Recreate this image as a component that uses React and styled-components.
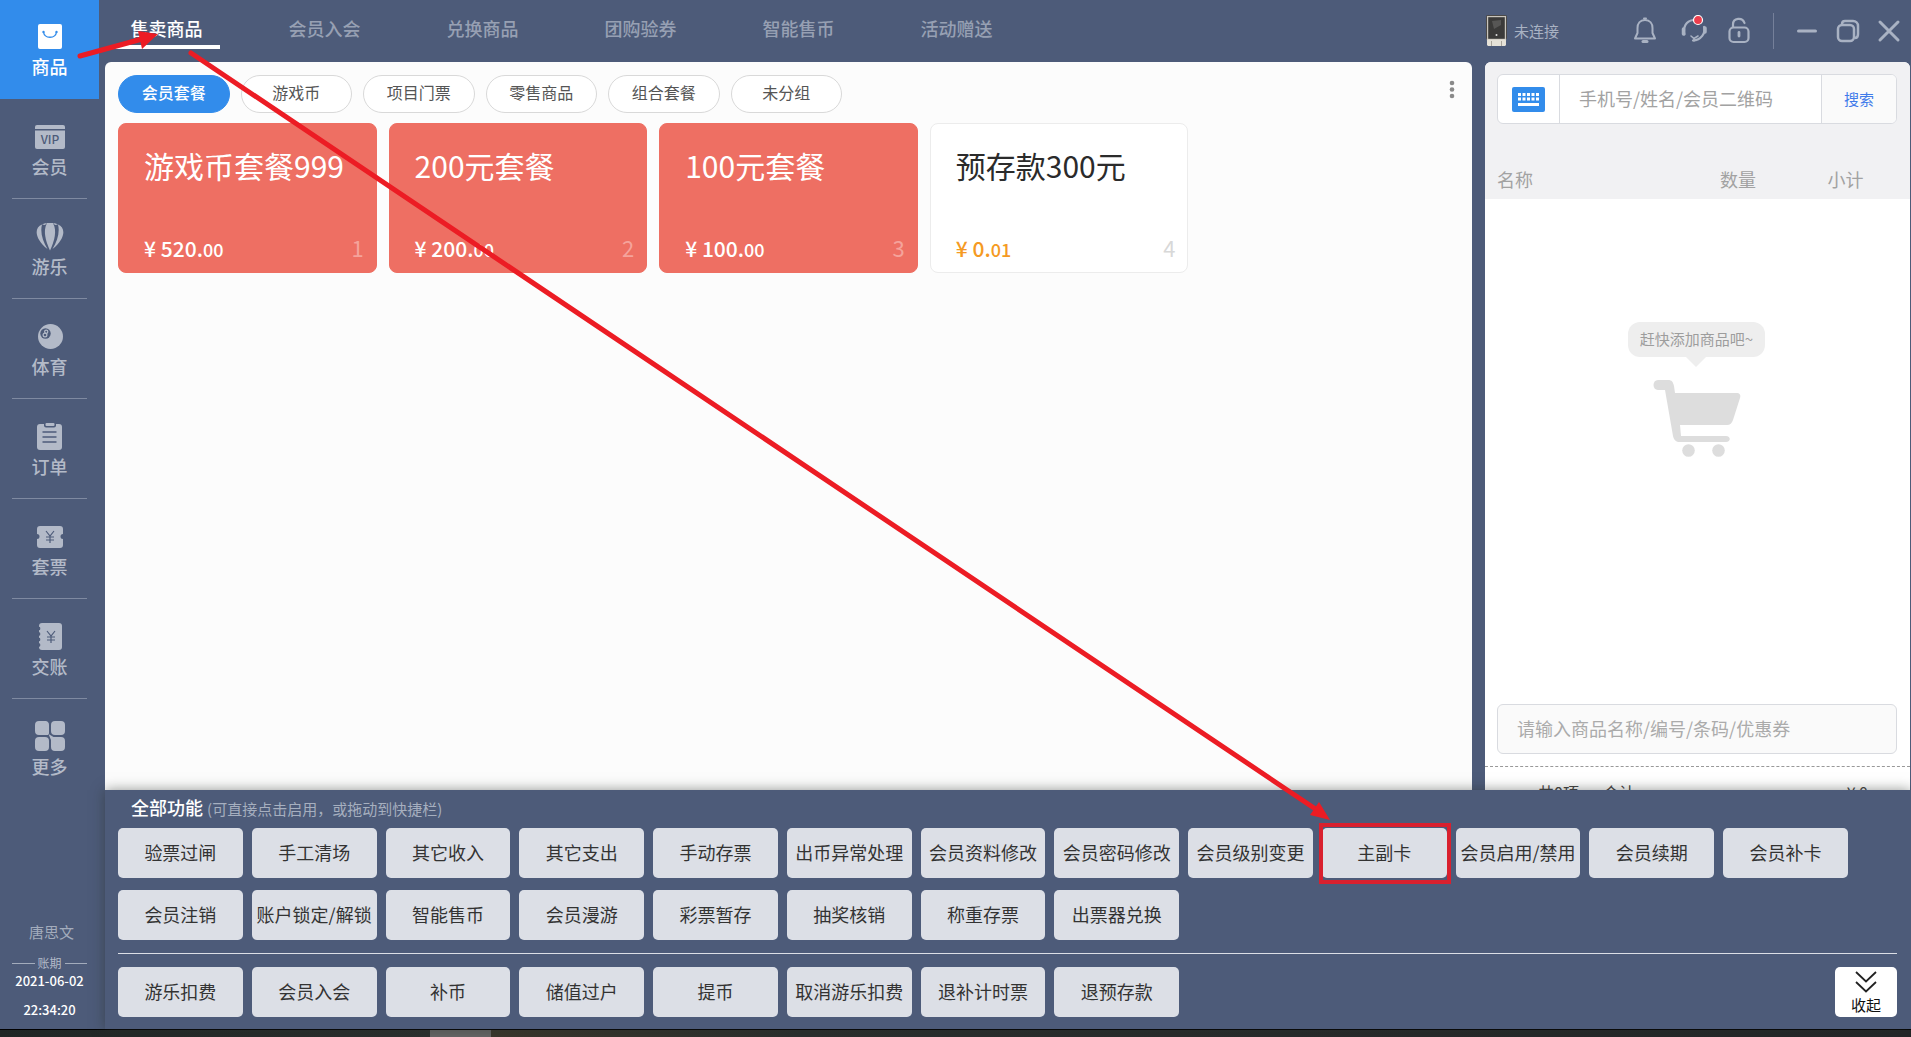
import React, { Fragment } from 'react';
import styled, { createGlobalStyle } from 'styled-components';

const GlobalStyle = createGlobalStyle`
    :root{
        --bg: #4d5b79;
        --blue: #328ceb;
        --muted: #b3bac8;
        --coral: #ee6f63;
        --red: #ec1c24;
    }
    *{
        box-sizing: border-box;
    }
    body{
        margin: 0;
        background: var(--bg);
        font-family: 'Noto Sans CJK SC', 'Noto Sans', sans-serif;
        font-size: 18px;
        line-height: 26px;
    }
    button, input{
        font-family: inherit;
        font-size: inherit;
        line-height: inherit;
        margin: 0;
        padding: 0;
        border: 0;
        background: none;
    }
    svg{
        display: block;
    }
`;

const Page = styled.div`
    position: relative;
    display: flex;
    flex-direction: column;
    height: 100vh;
    min-height: 760px;
    overflow: hidden;
    background: var(--bg);
`;

const Shell = styled.div`
    display: flex;
    flex: 1;
    min-height: 0;
`;

const Sidebar = styled.aside`
    display: flex;
    flex-direction: column;
    flex: 0 0 99px;
    padding-bottom: 9px;
`;

const SideItem = styled.button`
    position: relative;
    display: flex;
    flex-direction: column;
    align-items: center;
    width: 100%;
    height: ${(p) => (p.$active ? '99px' : '100px')};
    padding-top: ${(p) => (p.$active ? '20px' : '21px')};
    color: ${(p) => (p.$active ? '#fff' : 'var(--muted)')};
    background: ${(p) => (p.$active ? 'var(--blue)' : 'transparent')};
    font-weight: 500;
    svg{
        width: 32px;
        height: 32px;
        margin-bottom: 1px;
    }
    &:not(:first-child):not(:last-child)::after{
        content: '';
        position: absolute;
        left: 12px;
        right: 12px;
        bottom: 0;
        height: 1px;
        background: #7f8aa1;
    }
`;

const Shift = styled.div`
    margin-top: auto;
    text-align: center;
    color: #fff;
    font-size: 13px;
    line-height: 20px;
    font-weight: 500;
    p{
        margin: 0;
    }
    p + p{
        margin-top: 9px;
    }
    .shift__name{
        color: #a3acbc;
        font-size: 15px;
        font-weight: 400;
        margin-bottom: 14px;
        padding-left: 4px;
    }
    .shift__label{
        display: flex;
        align-items: center;
        gap: 3px;
        margin-bottom: 1px;
        padding: 0 12px;
        color: var(--muted);
        font-size: 12px;
        line-height: 14px;
        font-weight: 400;
        &::before,
        &::after{
            content: '';
            flex: 1;
            height: 1px;
            background: #a3acbc;
        }
    }
`;

const Main = styled.main`
    position: relative;
    display: flex;
    flex-direction: column;
    flex: 1;
    min-width: 0;
    margin-left: 6px;
`;

const TopBar = styled.header`
    display: flex;
    flex: 0 0 62px;
`;

const Nav = styled.nav`
    display: flex;
    flex: 1;
    gap: 51px;
    padding: 0 8px;
`;

const NavLink = styled.a`
    height: 49px;
    width: 107px;
    padding-top: 15px;
    text-align: center;
    text-decoration: none;
    font-weight: 500;
    color: ${(p) => (p.$active ? '#fff' : '#97a0b3')};
    border-bottom: 4px solid ${(p) => (p.$active ? '#fff' : 'transparent')};
`;

const Status = styled.div`
    display: flex;
    align-items: center;
    flex: 0 0 426px;
    padding-right: 9px;
    color: #a9b2c3;
    font-size: 15px;
    .status__device{
        display: flex;
        align-items: center;
        gap: 7px;
        flex: 1;
        padding-left: 1px;
    }
    .status__tools{
        display: flex;
        gap: 19px;
        padding-bottom: 2px;
    }
    .status__window{
        display: flex;
        align-items: center;
        gap: 15px;
        height: 36px;
        margin-left: 21px;
        padding-left: 20px;
        border-left: 1px solid #75809a;
    }
`;

const IconButton = styled.button`
    display: block;
    color: #a9b2c3;
`;

const Workspace = styled.div`
    display: flex;
    flex: 1;
    gap: 13px;
    min-height: 0;
    padding-right: 1px;
`;

const Goods = styled.section`
    flex: 1;
    min-width: 0;
    padding: 13px;
    background: #fcfcfc;
    border-radius: 6px 6px 0 0;
`;

const PillRow = styled.div`
    display: flex;
    align-items: flex-start;
    justify-content: space-between;
    margin-bottom: 10px;
    .pills__more{
        padding-top: 3px;
    }
`;

const Pills = styled.div`
    display: grid;
    grid-template-columns: repeat(6, 1fr);
    gap: 11px;
    width: 54%;
`;

const Pill = styled.button`
    height: 38px;
    border-radius: 19px;
    font-size: 16px;
    padding-bottom: 4px;
    font-weight: ${(p) => (p.$active ? 500 : 400)};
    color: ${(p) => (p.$active ? '#fff' : '#555')};
    background: ${(p) => (p.$active ? 'var(--blue)' : '#fff')};
    border: 1px solid ${(p) => (p.$active ? 'var(--blue)' : '#d9d9d9')};
`;

const Cards = styled.div`
    display: grid;
    grid-template-columns: repeat(5, 1fr);
    gap: 12px;
`;

const Card = styled.button`
    display: flex;
    flex-direction: column;
    justify-content: space-between;
    height: 150px;
    padding: 19px 12px 7px 25px;
    text-align: left;
    border-radius: 8px;
    border: 1px solid ${(p) => (p.$plain ? '#ececec' : 'var(--coral)')};
    color: ${(p) => (p.$plain ? '#2b2b2b' : '#fff')};
    background: ${(p) => (p.$plain ? '#fff' : 'var(--coral)')};
    .card__title{
        font-size: 30px;
        line-height: 44px;
    }
    .card__bottom{
        display: flex;
        justify-content: space-between;
        align-items: baseline;
        width: 100%;
        line-height: 32px;
    }
    .card__price{
        font-size: 21px;
        font-weight: 500;
        color: ${(p) => (p.$plain ? '#f59a23' : '#fff')};
        small{
            font-size: 18px;
        }
    }
    .card__index{
        font-size: 22px;
        color: ${(p) => (p.$plain ? '#d8d8d8' : '#f5a39b')};
    }
`;

const Cart = styled.section`
    display: flex;
    flex-direction: column;
    flex: 0 0 425px;
    background: #fff;
    border-radius: 6px 6px 0 0;
    overflow: hidden;
`;

const CartHead = styled.div`
    background: #f1f1f3;
    padding-top: 12px;
`;

const SearchBox = styled.form`
    display: flex;
    height: 50px;
    margin: 0 13px 37px 12px;
    background: #fff;
    border: 1px solid #d9dbe0;
    border-radius: 6px;
    overflow: hidden;
    .search__keyboard{
        display: flex;
        align-items: center;
        justify-content: center;
        width: 61px;
    }
    input{
        flex: 1;
        min-width: 0;
        padding: 0 19px 2px;
        border: solid #d9dbe0;
        border-width: 0 1px;
    }
    .search__submit{
        width: 74px;
        font-size: 15px;
        color: #3f7bea;
        background: #fafafa;
    }
    input::placeholder{
        color: #a2a2a2;
        opacity: 1;
    }
`;

const CartTable = styled.table`
    width: 100%;
    table-layout: fixed;
    border-collapse: collapse;
    th{
        height: 38px;
        padding: 0 0 2px;
        font-weight: 400;
        color: #a2a2a2;
    }
    th:nth-child(1){
        padding-left: 12px;
        text-align: left;
    }
    th:nth-child(2){
        width: 108px;
    }
    th:nth-child(3){
        width: 118px;
        padding-right: 11px;
    }
`;

const EmptyCart = styled.div`
    display: flex;
    flex-direction: column;
    align-items: center;
    flex: 1;
    padding: 123px 2px 0 0;
    p{
        position: relative;
        margin: 0 0 22px;
        padding: 0 12px 2px;
        line-height: 33px;
        font-size: 15px;
        color: #9d9d9d;
        background: #eee;
        border-radius: 12px;
    }
    p::after{
        content: '';
        position: absolute;
        left: 50%;
        top: 100%;
        margin-left: -10px;
        border: 10px solid transparent;
        border-top-color: #eee;
        border-bottom: 0;
    }
`;

const GoodsInput = styled.input`
    height: 50px;
    margin: 0 13px 12px 12px;
    padding: 0 19px 2px;
    background: #fafafa;
    border: 1px solid #d9dbe0;
    border-radius: 6px;
    &::placeholder{
        color: #ababab;
        opacity: 1;
    }
`;

const Total = styled.div`
    display: flex;
    gap: 24px;
    flex: 0 0 263px;
    padding: 12px 42px 0 53px;
    border-top: 1px dashed #999;
    font-size: 16px;
    color: #444;
    span:last-child{
        margin-left: auto;
    }
`;

const Drawer = styled.section`
    position: absolute;
    left: 0;
    right: 0;
    bottom: 0;
    padding: 4px 14px 12px 13px;
    background: var(--bg);
    box-shadow: 0 0 12px rgba(40, 45, 40, 0.5);
    h2{
        margin: 0 0 6px 13px;
        color: #fff;
        font-size: 18px;
        line-height: 26px;
        font-weight: 500;
        small{
            font-size: 15px;
            font-weight: 400;
            color: #a6afbf;
        }
    }
`;

const Actions = styled.div`
    display: grid;
    grid-template-columns: repeat(13, 1fr);
    gap: 12px 9px;
    padding-right: 49px;
`;

const Action = styled.button`
    position: relative;
    height: 50px;
    padding-bottom: 3px;
    color: #333;
    background: #dcdfe6;
    border-radius: 5px;
    white-space: nowrap;
    ${(p) => p.$marked && `
        &::after{
            content: '';
            position: absolute;
            z-index: 1;
            inset: -5px -4px -6px -3px;
            border: 4px solid #d9202e;
        }
    `}
`;

const Shortcuts = styled.div`
    position: relative;
    margin-top: 13px;
    padding-top: 13px;
    border-top: 1px solid #dcdfe6;
`;

const Collapse = styled.button`
    position: absolute;
    right: 0;
    bottom: 0;
    display: flex;
    flex-direction: column;
    align-items: center;
    width: 62px;
    height: 50px;
    padding-top: 3px;
    font-size: 15px;
    line-height: 22px;
    color: #111;
    background: #fff;
    border-radius: 5px;
`;

const TaskBar = styled.footer`
    flex: 0 0 8px;
    border-top: 1px solid #000;
    background: linear-gradient(90deg, #1f2625 0, #2b302f 430px, #666 430px, #666 491px, #3a372c 491px, #2a2f2e 800px, #232628);
`;

const Arrows = styled.svg`
    position: absolute;
    top: 0;
    left: 0;
    pointer-events: none;
    stroke: var(--red);
    fill: var(--red);
`;

const BagIcon = () => (
    <svg viewBox="0 0 32 32">
        <rect x="4" y="4" width="24" height="25" rx="2" fill="#fff" />
        <path d="M9.500 12c1 7 12 7 13 0" fill="none" stroke="#328ceb" strokeWidth="1.300" />
        <circle cx="9.500" cy="12" r="1.200" fill="#328ceb" />
        <circle cx="22.500" cy="12" r="1.200" fill="#328ceb" />
    </svg>
);

const VipIcon = () => (
    <svg viewBox="0 0 32 32" fill="currentColor">
        <path d="M1 7a2 2 0 0 1 2-2h26a2 2 0 0 1 2 2v2H1z" />
        <path d="M1 10.500h30V27a2 2 0 0 1-2 2H3a2 2 0 0 1-2-2z" />
        <text x="16" y="24" textAnchor="middle" fontSize="12" fontWeight="500" fill="#4d5b79">VIP</text>
    </svg>
);

const BalloonIcon = () => (
    <svg viewBox="0 0 32 32" fill="currentColor">
        <path d="M8 4.500C-.5 8 1 19 13.500 29 8.500 21 6 12 8 4.500z" />
        <path d="M24 4.500C32.500 8 31 19 18.500 29 23.500 21 26 12 24 4.500z" />
        <path d="M13 3h6c4.500 8 1 19-3 27.500C12 22 8.500 11 13 3z" />
        <path d="M8 4.500Q10 3 13 3l-2 2zM24 4.500Q22 3 19 3l2 2z" />
    </svg>
);

const BallIcon = () => (
    <svg viewBox="0 0 32 32">
        <circle cx="16.500" cy="16.500" r="12.500" fill="currentColor" />
        <circle cx="11.500" cy="13.500" r="5.200" fill="#4d5b79" />
        <g fill="none" stroke="currentColor" strokeWidth="1.200">
            <circle cx="12.200" cy="11.800" r="1.600" />
            <circle cx="11" cy="15" r="1.900" />
        </g>
    </svg>
);

const OrderIcon = () => (
    <svg viewBox="0 0 32 32">
        <rect x="3" y="4" width="25" height="26" rx="3" fill="currentColor" />
        <path d="M10 3h12v2.500a2 2 0 0 1-2 2h-8a2 2 0 0 1-2-2z" fill="#4d5b79" />
        <rect x="11.500" y="3" width="9" height="3" rx="1" fill="currentColor" />
        <path d="M9 12h13M9 17h13M9 22h13" stroke="#4d5b79" strokeWidth="1.400" strokeLinecap="round" />
    </svg>
);

const Yen = ({ x }) => (
    <path
        d={`M${x - 4} 11l4 5 4-5M${x} 16v7M${x - 4} 17h8M${x - 4} 20h8`}
        fill="none"
        stroke="#4d5b79"
        strokeWidth="1.200"
    />
);

const TicketIcon = () => (
    <svg viewBox="0 0 32 32">
        <path d="M6 6h20a3 3 0 0 1 3 3v5a2.500 2.500 0 0 0 0 5v6a3 3 0 0 1-3 3H6a3 3 0 0 1-3-3v-6a2.500 2.500 0 0 0 0-5V9a3 3 0 0 1 3-3z" fill="currentColor" />
        <Yen x={16} />
    </svg>
);

const BillIcon = () => (
    <svg viewBox="0 0 32 32">
        <rect x="5" y="3" width="23" height="27" rx="3" fill="currentColor" />
        <path d="M5 8v1M5 13.500v1M5 19v1M5 24.500v1" stroke="#4d5b79" strokeWidth="2.500" strokeLinecap="round" />
        <Yen x={17} />
    </svg>
);

const MoreIcon = () => (
    <svg viewBox="0 0 32 32" fill="currentColor">
        <path d="M5 1h7a4 4 0 0 1 3 4v6.500a3.500 3.500 0 0 1-1 3.500H5a4 4 0 0 1-4-4V5a4 4 0 0 1 4-4z" />
        <path d="M21 1h6a4 4 0 0 1 4 4v6a4 4 0 0 1-4 4h-6a4 4 0 0 1-4-4V5a4 4 0 0 1 4-4z" />
        <path d="M5 17h6a4 4 0 0 1 4 4v6a4 4 0 0 1-4 4H5a4 4 0 0 1-4-4v-6a4 4 0 0 1 4-4z" />
        <path d="M14.500 14l5 3H27a4 4 0 0 1 4 4v6a4 4 0 0 1-4 4h-6a4 4 0 0 1-4-4v-7z" />
    </svg>
);

const DeviceIcon = () => (
    <svg width="21" height="32" viewBox="0 0 21 32">
        <rect x="0" y="0" width="21" height="25" rx="2" fill="#2d2b2a" />
        <rect x="1.500" y="1.500" width="18" height="23" fill="#3b3a39" stroke="#c9c5bd" strokeWidth="1.400" />
        <path d="M6 6l9-1v5l-7 4z" fill="#575655" />
        <circle cx="10.500" cy="20" r="1" fill="#ddd" />
        <path d="M1 24.500h19v5.500l-1 1H2l-1-1z" fill="#e6e2d8" />
        <path d="M5.500 26v5M15.500 26v5" stroke="#aaa69c" />
    </svg>
);

const BellIcon = () => (
    <svg width="26" height="30" viewBox="0 0 26 30" fill="none" stroke="currentColor" strokeWidth="2" strokeLinejoin="round" strokeLinecap="round">
        <path d="M13 5c-5 0-7.500 3.500-7.500 8v5L3 23.500h20L20.500 18v-5c0-4.500-2.500-8-7.500-8z" />
        <path d="M12 3.500h2" />
        <path d="M11 26.500h4" strokeWidth="3" />
    </svg>
);

const ServiceIcon = () => (
    <svg width="30" height="30" viewBox="0 0 30 30" fill="none" stroke="currentColor" strokeWidth="2.200" strokeLinecap="round">
        <path d="M7.500 19.500C6 12 9 6 16 5" />
        <path d="M27 12c2 6-3 13-11 13.500" />
        <path d="M6.500 14v5" strokeWidth="3.500" />
        <path d="M28 13v4" strokeWidth="3.500" />
        <path d="M14 21l3 2.500 4-2.500M17 23.500V26" strokeWidth="1.600" />
        <circle cx="21" cy="5" r="4.500" fill="#ee3d4d" stroke="#fff" strokeWidth="1.200" />
    </svg>
);

const LockIcon = () => (
    <svg width="26" height="30" viewBox="0 0 26 30" fill="none" stroke="currentColor" strokeWidth="2.200" strokeLinecap="round">
        <rect x="3.500" y="12.500" width="19" height="14.500" rx="4" />
        <path d="M7 12V9.500C7 2.500 16.500 2 18.500 8" />
        <path d="M13 17.500v3.500" strokeWidth="2.800" />
    </svg>
);

const MinimizeIcon = () => (
    <svg width="26" height="26" viewBox="0 0 26 26" stroke="currentColor" strokeWidth="3" strokeLinecap="round">
        <path d="M4.500 13h17" />
    </svg>
);

const RestoreIcon = () => (
    <svg width="26" height="26" viewBox="0 0 26 26" fill="none" stroke="currentColor" strokeWidth="2.500">
        <rect x="3" y="7" width="16" height="16" rx="4" />
        <path d="M7 6c0-2 1-3 3-3h8a5 5 0 0 1 5 5v8c0 2-1 4-3 4" />
    </svg>
);

const CloseIcon = () => (
    <svg width="26" height="26" viewBox="0 0 26 26" stroke="currentColor" strokeWidth="3" strokeLinecap="round">
        <path d="M4 4l18 18M22 4L4 22" />
    </svg>
);

const KeyboardIcon = () => (
    <svg width="33" height="25" viewBox="0 0 33 25">
        <rect width="33" height="25" rx="2" fill="#328ceb" />
        <path d="M6 7.500h21M6 12h21" stroke="#fff" strokeWidth="2.800" strokeDasharray="3 1.500" />
        <path d="M6 17.500h21" stroke="#fff" strokeWidth="3" />
    </svg>
);

const CartIcon = () => (
    <svg width="90" height="80" viewBox="0 0 90 80" fill="#ddd">
        <path d="M6 1h10c4 0 5 2 6 6l1 7h61c4 0 5 2 4 5l-7 22c-1 3-3 5-6 5H28l1 11h45c5 0 5 6 0 6H28c-4 0-6-2-7-6L13 11H6C0 11 0 1 6 1z" />
        <circle cx="36.500" cy="71.500" r="6.300" />
        <circle cx="66.500" cy="71.500" r="6.300" />
    </svg>
);

const DotsIcon = () => (
    <svg width="14" height="24" viewBox="0 0 14 24" fill="#8a8a8a">
        <circle cx="7" cy="5" r="2.300" />
        <circle cx="7" cy="11.500" r="2.300" />
        <circle cx="7" cy="18" r="2.300" />
    </svg>
);

const DownIcon = () => (
    <svg width="24" height="24" viewBox="0 0 24 24" fill="none" stroke="#222" strokeWidth="1.800">
        <path d="M2 2l10 9.500L22 2M2 12l10 9.500L22 12" />
    </svg>
);

const menu = [
    { label: '商品', Icon: BagIcon },
    { label: '会员', Icon: VipIcon },
    { label: '游乐', Icon: BalloonIcon },
    { label: '体育', Icon: BallIcon },
    { label: '订单', Icon: OrderIcon },
    { label: '套票', Icon: TicketIcon },
    { label: '交账', Icon: BillIcon },
    { label: '更多', Icon: MoreIcon },
];

const tabs = ['售卖商品', '会员入会', '兑换商品', '团购验券', '智能售币', '活动赠送'];
const groups = ['会员套餐', '游戏币', '项目门票', '零售商品', '组合套餐', '未分组'];

const goods = [
    { title: '游戏币套餐999', price: '520', cents: '00' },
    { title: '200元套餐', price: '200', cents: '00' },
    { title: '100元套餐', price: '100', cents: '00' },
    { title: '预存款300元', price: '0', cents: '01', plain: true },
];

const actions = [
    '验票过闸', '手工清场', '其它收入', '其它支出', '手动存票', '出币异常处理', '会员资料修改',
    '会员密码修改', '会员级别变更', '主副卡', '会员启用/禁用', '会员续期', '会员补卡',
    '会员注销', '账户锁定/解锁', '智能售币', '会员漫游', '彩票暂存', '抽奖核销', '称重存票', '出票器兑换',
];
const shortcuts = ['游乐扣费', '会员入会', '补币', '储值过户', '提币', '取消游乐扣费', '退补计时票', '退预存款'];

const SideMenu = () => (
    <Sidebar>
        <div>
            {menu.map(({ label, Icon }, i) => (
                <SideItem key={label} $active={i === 0}>
                    <Icon />
                    {label}
                </SideItem>
            ))}
        </div>
        <Shift>
            <p className="shift__name">唐思文</p>
            <div className="shift__label">账期</div>
            <p>2021-06-02</p>
            <p>22:34:20</p>
        </Shift>
    </Sidebar>
);

const Header = () => (
    <TopBar>
        <Nav>
            {tabs.map((tab, i) => (
                <NavLink href="#" key={tab} $active={i === 0}>{tab}</NavLink>
            ))}
        </Nav>
        <Status>
            <div className="status__device">
                <DeviceIcon />
                <span>未连接</span>
            </div>
            <div className="status__tools">
                <IconButton aria-label="通知"><BellIcon /></IconButton>
                <IconButton aria-label="客服"><ServiceIcon /></IconButton>
                <IconButton aria-label="锁屏"><LockIcon /></IconButton>
            </div>
            <div className="status__window">
                <IconButton aria-label="最小化"><MinimizeIcon /></IconButton>
                <IconButton aria-label="还原"><RestoreIcon /></IconButton>
                <IconButton aria-label="关闭"><CloseIcon /></IconButton>
            </div>
        </Status>
    </TopBar>
);

const GoodsPanel = () => (
    <Goods>
        <PillRow>
            <Pills>
                {groups.map((group, i) => (
                    <Pill key={group} $active={i === 0}>{group}</Pill>
                ))}
            </Pills>
            <IconButton className="pills__more" aria-label="更多操作"><DotsIcon /></IconButton>
        </PillRow>
        <Cards>
            {goods.map((item, i) => (
                <Card key={item.title} $plain={item.plain}>
                    <span className="card__title">{item.title}</span>
                    <span className="card__bottom">
                        <span className="card__price">¥ {item.price}.<small>{item.cents}</small></span>
                        <span className="card__index">{i + 1}</span>
                    </span>
                </Card>
            ))}
        </Cards>
    </Goods>
);

const CartPanel = () => (
    <Cart>
        <CartHead>
            <SearchBox onSubmit={(e) => e.preventDefault()}>
                <button type="button" className="search__keyboard" aria-label="键盘">
                    <KeyboardIcon />
                </button>
                <input aria-label="会员" placeholder="手机号/姓名/会员二维码" />
                <button type="submit" className="search__submit">搜索</button>
            </SearchBox>
            <CartTable>
                <thead>
                    <tr>
                        <th>名称</th>
                        <th>数量</th>
                        <th>小计</th>
                    </tr>
                </thead>
            </CartTable>
        </CartHead>
        <EmptyCart>
            <p>赶快添加商品吧~</p>
            <CartIcon />
        </EmptyCart>
        <GoodsInput aria-label="商品" placeholder="请输入商品名称/编号/条码/优惠券" />
        <Total>
            <span>共0项</span>
            <span>合计</span>
            <span>¥ 0</span>
        </Total>
    </Cart>
);

const FunctionDrawer = () => (
    <Drawer>
        <h2>全部功能 <small>(可直接点击启用，或拖动到快捷栏)</small></h2>
        <Actions>
            {actions.map((name) => (
                <Action key={name} $marked={name === '主副卡'}>{name}</Action>
            ))}
        </Actions>
        <Shortcuts>
            <Actions>
                {shortcuts.map((name) => (
                    <Action key={name}>{name}</Action>
                ))}
            </Actions>
            <Collapse>
                <DownIcon />
                收起
            </Collapse>
        </Shortcuts>
    </Drawer>
);

const App = () => {
    return (
        <Fragment>
            <GlobalStyle />
            <Page>
                <Shell>
                    <SideMenu />
                    <Main>
                        <Header />
                        <Workspace>
                            <GoodsPanel />
                            <CartPanel />
                        </Workspace>
                        <FunctionDrawer />
                    </Main>
                </Shell>
                <TaskBar />
                <Arrows width="1911" height="1037" aria-hidden="true">
                    <path d="M80 56L142 39M191 53L1317 810" strokeWidth="5" strokeLinecap="round" />
                    <path d="M158 34L138 31L142 49zM1330 820L1319 802L1310 815z" stroke="none" />
                </Arrows>
            </Page>
        </Fragment>
    );
};

export default App;
